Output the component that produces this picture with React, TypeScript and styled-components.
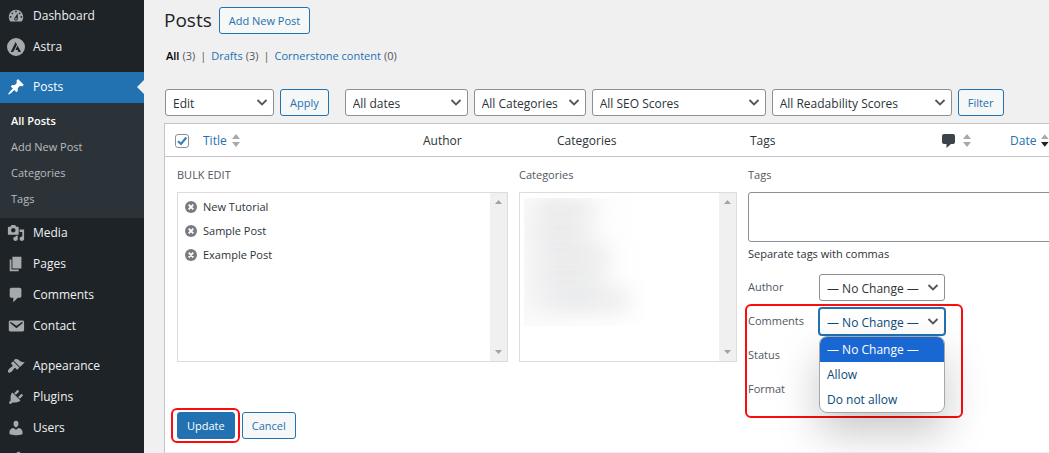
import React, { useState } from "react";
import styled, { createGlobalStyle, css } from "styled-components";

const color = {
  page: "#f0f0f1",
  menu: "#1d2327",
  submenu: "#2c3338",
  blue: "#2271b1",
  text: "#2c3338",
  label: "#50575e",
  muted: "#a7aaad",
  line: "#c3c4c7",
  control: "#8c8f94",
  mark: "#fb0d0d",
};

const GlobalStyle = createGlobalStyle`
  *, *::before, *::after { box-sizing: border-box; }
  body {
    margin: 0;
    background: ${color.page};
    color: ${color.text};
    font: 11px/18px "Open Sans", "Noto Sans", sans-serif;
  }
  button, input, select, textarea { font: inherit; margin: 0; }
  ul { list-style: none; margin: 0; padding: 0; }
`;

const Shell = styled.div`
  display: flex;
  height: 100vh;
  overflow: hidden;
`;

/* ---------- Side menu ---------- */

const Menu = styled.nav`
  flex: 0 0 144px;
  padding-top: 1px;
  background: ${color.menu};
`;

const MenuItem = styled.li<{ $spaced?: boolean }>`
  margin-top: ${(p) => (p.$spaced ? 9 : 0)}px;
`;

const MenuLink = styled.a<{ $current?: boolean }>`
  position: relative;
  display: flex;
  align-items: center;
  gap: 8px;
  height: 31px;
  padding: 0 0 1px 7px;
  color: ${(p) => (p.$current ? "#fff" : "#f0f0f1")};
  background: ${(p) => (p.$current ? color.blue : "transparent")};
  font-size: 12px;
  text-decoration: none;

  svg {
    flex: none;
    width: 18px;
    height: 18px;
    fill: ${(p) => (p.$current ? "#fff" : color.muted)};
  }

  ${(p) =>
    p.$current &&
    css`
      &::after {
        content: "";
        position: absolute;
        right: 0;
        top: 8px;
        border: 7px solid transparent;
        border-left-width: 0;
        border-right-color: ${color.page};
      }
    `}
`;

const Submenu = styled.ul`
  padding: 5px 0 6px;
  background: ${color.submenu};
`;

const SubmenuLink = styled.a<{ $current?: boolean }>`
  display: block;
  padding-left: 11px;
  line-height: 26px;
  color: ${(p) => (p.$current ? "#fff" : "#b9bcbf")};
  font-weight: ${(p) => (p.$current ? 600 : 400)};
  text-decoration: none;
`;

/* ---------- Shared controls ---------- */

const Main = styled.main`
  flex: 1;
  min-width: 0;
  overflow: hidden;
  padding: 7px 0 0 20px;
`;

const Button = styled.button<{ $primary?: boolean }>`
  height: 27px;
  padding: 0 9px;
  border: 1px solid ${color.blue};
  border-radius: 3px;
  background: ${(p) => (p.$primary ? color.blue : "#f6f7f7")};
  color: ${(p) => (p.$primary ? "#fff" : color.blue)};
  white-space: nowrap;
`;

const SelectBox = styled.span<{ $width: number; $focused?: boolean }>`
  position: relative;
  display: block;
  flex: none;
  width: ${(p) => p.$width}px;

  select {
    appearance: none;
    display: block;
    width: 100%;
    height: 27px;
    padding: 2px 20px 0 7px;
    border: 1px solid ${(p) => (p.$focused ? color.blue : color.control)};
    border-radius: 3px;
    outline: none;
    box-shadow: ${(p) => (p.$focused ? `0 0 0 1px ${color.blue}` : "none")};
    background: #fff;
    color: ${(p) => (p.$focused ? "#0a4b78" : color.text)};
    font-size: 12px;
  }

  svg {
    position: absolute;
    right: 6px;
    top: 9px;
    width: 12px;
    height: 9px;
    pointer-events: none;
  }
`;

type SelectProps = {
  label?: string;
  id?: string;
  width: number;
  options: string[];
  focused?: boolean;
};

const Select = ({ label, id, width, options, focused }: SelectProps) => (
  <SelectBox $width={width} $focused={focused}>
    <select id={id} aria-label={label}>
      {options.map((o) => (
        <option key={o}>{o}</option>
      ))}
    </select>
    <svg viewBox="0 0 12 9" fill="none" stroke="#50575e" strokeWidth="1.8" aria-hidden="true">
      <path d="M1.5 2 6 6.500 10.500 2" />
    </svg>
  </SelectBox>
);

/* ---------- Page head ---------- */

const Head = styled.header`
  display: flex;
  align-items: center;
  gap: 7px;
`;

const Title = styled.h1`
  margin: 0;
  font-size: 19px;
  line-height: 27px;
  font-weight: 400;
  color: #1d2327;
`;

const Views = styled.ul`
  display: flex;
  margin: 13px 0 24px;
  padding-left: 2px;
  color: ${color.label};

  li + li::before {
    content: "|";
    margin: 0 5px;
  }
`;

const ViewLink = styled.a<{ $current?: boolean }>`
  margin-right: 3px;
  color: ${(p) => (p.$current ? "#000" : color.blue)};
  font-weight: ${(p) => (p.$current ? 600 : 400)};
  text-decoration: none;
`;

const Filters = styled.form`
  display: flex;
  gap: 6px;
  margin-bottom: 7px;
  padding-left: 1px;
`;

const BulkAction = styled.div`
  display: flex;
  gap: 6px;
  margin-right: 10px;
`;

/* ---------- Post table ---------- */

const Table = styled.table`
  width: 100%;
  table-layout: fixed;
  border-collapse: separate;
  border-spacing: 0;
  border: 1px solid ${color.line};
  border-right: 0;
  background: #fff;
`;

const HeadCell = styled.th<{ $width?: number }>`
  width: ${(p) => (p.$width ? `${p.$width}px` : "auto")};
  height: 33px;
  padding: 1px 0 0 8px;
  border-bottom: 1px solid ${color.line};
  font-size: 12px;
  font-weight: 400;
  text-align: left;
  white-space: nowrap;
`;

const CheckCell = styled(HeadCell)`
  padding-left: 10px;
`;

const Check = styled.input`
  appearance: none;
  display: block;
  width: 14px;
  height: 14px;
  border: 1px solid ${color.control};
  border-radius: 3px;
  background: #fff;

  &:checked {
    background: no-repeat center / 12px
      url("data:image/svg+xml,%3Csvg xmlns='http://www.w3.org/2000/svg' viewBox='0 0 12 12'%3E%3Cpath d='M2 6.300 5 9 10.300 2.500' fill='none' stroke='%233582c4' stroke-width='2.200'/%3E%3C/svg%3E");
  }
`;

const SortLink = styled.a<{ $gap?: number }>`
  display: flex;
  align-items: center;
  gap: ${(p) => p.$gap ?? 5}px;
  color: ${color.blue};
  text-decoration: none;
`;

const SortIcon = ({ down }: { down?: boolean }) => (
  <svg width="8" height="14" viewBox="0 0 8 14" aria-hidden="true">
    <path d="M4 0 8 5H0z" fill="#a7aaad" />
    <path d="M4 13 0 8h8z" fill={down ? "#1d2327" : "#a7aaad"} />
  </svg>
);

const EditCell = styled.td`
  padding: 9px 0 13px 12px;
  border-bottom: 1px solid #f0f0f1;
`;

/* ---------- Bulk edit ---------- */

const Columns = styled.div`
  display: grid;
  grid-template-columns: minmax(0, 331fr) minmax(0, 218fr) minmax(0, 301fr);
  column-gap: 11px;
`;

const Legend = styled.h2<{ $upper?: boolean }>`
  display: block;
  margin: 0 0 8px;
  font-size: 11px;
  line-height: 18px;
  font-weight: 400;
  color: ${color.label};
  text-transform: ${(p) => (p.$upper ? "uppercase" : "none")};
`;

const ListBox = styled.div`
  display: flex;
  justify-content: space-between;
  height: 170px;
  border: 1px solid #dcdcde;
  background: #fff;
`;

const ListBody = styled.ul`
  flex: 1;
  min-width: 0;
  padding: 2px 0 0 7px;
`;

const Scrollbar = styled.div`
  display: flex;
  flex-direction: column;
  justify-content: space-between;
  align-items: center;
  width: 17px;
  padding: 7px 0;
  background: #f0f0f0;
`;

const ScrollTrack = () => (
  <Scrollbar aria-hidden="true">
    <svg width="7" height="4" viewBox="0 0 7 4">
      <path d="M3.500 0 7 4H0z" fill="#a3a3a3" />
    </svg>
    <svg width="7" height="4" viewBox="0 0 7 4">
      <path d="M3.500 4 0 0h7z" fill="#a3a3a3" />
    </svg>
  </Scrollbar>
);

const PostEntry = styled.li`
  display: flex;
  align-items: center;
  gap: 6px;
  height: 24px;
`;

const RemoveButton = styled.button`
  display: block;
  width: 12px;
  height: 12px;
  padding: 0;
  border: 0;
  background: none;

  svg {
    display: block;
  }
`;

const Redacted = styled.div`
  width: 122px;
  height: 128px;
  margin: 5px 0 0 4px;
  padding: 4px 0 18px 4px;
  display: flex;
  flex-direction: column;
  justify-content: space-between;
  overflow: hidden;
  background: linear-gradient(to right, #fbfbfb, #fdfdfd 60%, #fff);
`;

const Smudge = styled.span<{ $width: number }>`
  width: ${(p) => p.$width}%;
  height: 16px;
  background: linear-gradient(to right, #f0f1f3, #dedfe1 40%, #e6e7e8);
  filter: blur(11px);
`;

const TagsInput = styled.textarea`
  display: block;
  width: calc(100% + 8px);
  height: 50px;
  border: 1px solid ${color.control};
  border-radius: 3px;
  background: #fff;
  resize: none;
`;

const Hint = styled.p`
  margin: 3px 0 11px;
`;

const Fields = styled.div`
  display: grid;
  row-gap: 7px;
`;

const Field = styled.div`
  position: relative;
  display: flex;
  align-items: center;

  label {
    flex: 0 0 71px;
    padding-bottom: 2px;
    color: ${color.label};
  }
`;

const Highlight = styled.div`
  position: absolute;
  left: -3px;
  top: -4px;
  width: 218px;
  height: 114px;
  border: 2px solid ${color.mark};
  border-radius: 6px;
  pointer-events: none;
`;

const Options = styled.ul`
  position: absolute;
  z-index: 1;
  left: 71px;
  top: 28px;
  width: 126px;
  overflow: hidden;
  border: 1px solid #a5a7aa;
  border-radius: 8px;
  background: #fff;
  box-shadow: 0 20px 44px rgba(0, 0, 0, 0.22);
`;

const Option = styled.li<{ $active?: boolean }>`
  padding-left: 7px;
  font-size: 12px;
  line-height: 25px;
  white-space: nowrap;
  background: ${(p) => (p.$active ? "#1967d2" : "transparent")};
  color: ${(p) => (p.$active ? "#fff" : "#0a4b78")};
`;

const Actions = styled.div`
  display: flex;
  gap: 7px;
  margin-top: 9px;
`;

const Ringed = styled.span`
  position: relative;

  &::after {
    content: "";
    position: absolute;
    inset: -4px -5px -4px -6px;
    border: 2px solid ${color.mark};
    border-radius: 6px;
    pointer-events: none;
  }
`;

/* ---------- Data ---------- */

const icons: Record<string, string> = {
  Dashboard:
    "M3.76 16h12.48c1.1-1.37 1.76-3.11 1.76-5 0-4.42-3.58-8-8-8s-8 3.58-8 8c0 1.89.66 3.63 1.76 5zM10 4c.55 0 1 .45 1 1s-.45 1-1 1-1-.45-1-1 .45-1 1-1zM6 6c.55 0 1 .45 1 1s-.45 1-1 1-1-.45-1-1 .45-1 1-1zm8 0c.55 0 1 .45 1 1s-.45 1-1 1-1-.45-1-1 .45-1 1-1zm-5.37 5.55L12 7v6c0 1.1-.9 2-2 2s-2-.9-2-2c0-.57.24-1.08.63-1.45zM4 10c.55 0 1 .45 1 1s-.45 1-1 1-1-.45-1-1 .45-1 1-1zm12 0c.55 0 1 .45 1 1s-.45 1-1 1-1-.45-1-1 .45-1 1-1zm-5 3c0-.55-.45-1-1-1s-1 .45-1 1 .45 1 1 1 1-.45 1-1z",
  Astra:
    "M10 0a10 10 0 1 0 0 20 10 10 0 0 0 0-20zM9.600 4.400l1.500 3L6.900 15.600H4.100zM11.700 8.200l3.900 7.400h-2.900l-1.100-2.400H9.300z",
  Posts:
    "M10.44 3.02l1.82-1.82 6.36 6.35-1.83 1.82c-1.05-.68-2.48-.57-3.41.36l-.75.75c-.92.93-1.04 2.35-.35 3.41l-1.83 1.82-2.41-2.41-2.8 2.79c-.42.42-3.38 2.71-3.8 2.29s1.86-3.39 2.28-3.81l2.79-2.79L4.1 9.36l1.83-1.82c1.05.69 2.48.57 3.4-.36l.75-.75c.93-.92 1.05-2.35.36-3.41z",
  Media:
    "M13 11V4c0-.55-.45-1-1-1h-1.67L9 1H5L3.67 3H2c-.55 0-1 .45-1 1v7c0 .55.45 1 1 1h10c.55 0 1-.45 1-1zM7 4.5c1.38 0 2.5 1.12 2.5 2.5S8.38 9.5 7 9.5 4.500 8.38 4.500 7 5.62 4.500 7 4.500zM14 6h5v10.500c0 1.38-1.12 2.500-2.500 2.500S14 17.88 14 16.500s1.12-2.500 2.500-2.500c.17 0 .34.02.5.05V9h-3V6zm-4 8.05V13h2v3.500c0 1.38-1.12 2.500-2.500 2.500S7 17.88 7 16.500 8.120 14 9.500 14c.17 0 .34.02.5.05z",
  Pages: "M6 15V2h10v13H6zm-1 1h8v2H3V5h2v11z",
  Comments:
    "M5 2h9c1.1 0 2 .9 2 2v7c0 1.1-.9 2-2 2h-2l-5 5v-5H5c-1.1 0-2-.9-2-2V4c0-1.1.9-2 2-2z",
  Contact:
    "M3.87 4h13.25C18.37 4 19 4.59 19 5.79v8.42c0 1.19-.63 1.79-1.88 1.79H3.87c-1.25 0-1.88-.6-1.88-1.79V5.79c0-1.2.63-1.79 1.88-1.79zm6.620 8.6l6.740-5.53c.24-.2.43-.66.13-1.07-.29-.41-.82-.42-1.17-.17l-5.700 3.860L4.800 5.830c-.35-.25-.88-.24-1.170.17-.3.41-.11.87.13 1.070z",
  Appearance:
    "M14.48 11.06L7.41 3.99l1.500-1.500c.5-.56 2.300-.47 3.510.32 1.210.8 1.430 1.280 2.910 2.100 1.180.64 2.450 1.260 4.450.85zm-.71.71L6.700 4.700 4.930 6.470c-.39.39-.39 1.020 0 1.410l1.060 1.060c.39.39.39 1.030 0 1.420-.6.6-1.430 1.110-2.210 1.690-.35.26-.7.53-1.010.84C1.430 14.230.4 16.080 1.400 17.070c.99 1 2.840-.03 4.180-1.360.31-.31.58-.66.85-1.020.57-.78 1.080-1.610 1.690-2.210.39-.39 1.020-.39 1.410 0l1.060 1.060c.39.39 1.020.39 1.410 0z",
  Plugins:
    "M13.11 4.36L9.870 7.600 8 5.730l3.240-3.240c.35-.34 1.050-.2 1.560.32.52.51.66 1.210.31 1.550zm-8 1.770l.91-1.120 9.010 9.010-1.190.84c-.71.71-2.630 1.160-3.820 1.160H6.140L4.900 17.260c-.59.59-1.540.59-2.120 0-.59-.58-.59-1.530 0-2.120l1.240-1.240v-3.880c0-1.130.4-3.190 1.090-3.890zm7.260 3.970l3.240-3.240c.34-.35 1.040-.21 1.550.31.52.51.66 1.210.31 1.550l-3.240 3.250z",
  Users:
    "M10 9.250c-2.270 0-2.730-3.440-2.730-3.440C7 4.020 7.820 2 9.970 2c2.160 0 2.980 2.020 2.710 3.810 0 0-.41 3.440-2.680 3.440zm0 2.570L12.720 10c2.390 0 4.520 2.330 4.520 4.530v2.490s-3.650 1.130-7.240 1.130c-3.650 0-7.240-1.130-7.240-1.130v-2.490c0-2.250 1.940-4.480 4.470-4.480z",
  Tools:
    "M16.68 9.770c-1.340 1.340-3.300 1.670-4.950.99l-5.410 6.520c-.99.99-2.590.99-3.580 0s-.99-2.590 0-3.570l6.520-5.420c-.68-1.650-.35-3.610.99-4.950 1.280-1.280 3.120-1.620 4.720-1.060l-2.890 2.890 2.820 2.820 2.860-2.870c.53 1.580.18 3.390-1.080 4.650zM3.810 16.210c.4.39 1.040.39 1.430 0 .4-.4.4-1.040 0-1.430-.39-.4-1.030-.4-1.430 0-.39.39-.39 1.030 0 1.430z",
};

type MenuEntry = { name: string; spaced?: boolean; children?: string[]; iconOnly?: boolean };

const menuItems: MenuEntry[] = [
  { name: "Dashboard" },
  { name: "Astra" },
  { name: "Posts", spaced: true, children: ["All Posts", "Add New Post", "Categories", "Tags"] },
  { name: "Media" },
  { name: "Pages" },
  { name: "Comments" },
  { name: "Contact" },
  { name: "Appearance", spaced: true },
  { name: "Plugins" },
  { name: "Users" },
  { name: "Tools", iconOnly: true },
];

const views = [
  { name: "All", count: 3, current: true },
  { name: "Drafts", count: 3 },
  { name: "Cornerstone content", count: 0 },
];

const noChange = "— No Change —";
const commentOptions = [noChange, "Allow", "Do not allow"];

const RedactedList = () => (
  <Redacted aria-hidden="true">
    {[56, 52, 68, 64, 86].map((width, i) => (
      <Smudge key={i} $width={width} />
    ))}
  </Redacted>
);

export default function App() {
  const [allChecked, setAllChecked] = useState(true);

  return (
    <>
      <GlobalStyle />
      <Shell>
        <Menu aria-label="Main menu">
          <ul>
            {menuItems.map((item) => (
              <MenuItem key={item.name} $spaced={item.spaced}>
                <MenuLink href="#" $current={!!item.children} aria-label={item.name}>
                  <svg viewBox="0 0 20 20" fillRule="evenodd" aria-hidden="true">
                    <path d={icons[item.name]} />
                  </svg>
                  {!item.iconOnly && item.name}
                </MenuLink>
                {item.children && (
                  <Submenu>
                    {item.children.map((child, i) => (
                      <li key={child}>
                        <SubmenuLink href="#" $current={i === 0}>
                          {child}
                        </SubmenuLink>
                      </li>
                    ))}
                  </Submenu>
                )}
              </MenuItem>
            ))}
          </ul>
        </Menu>

        <Main>
          <Head>
            <Title>Posts</Title>
            <Button type="button">Add New Post</Button>
          </Head>

          <Views>
            {views.map((v) => (
              <li key={v.name}>
                <ViewLink href="#" $current={v.current}>
                  {v.name}
                </ViewLink>
                ({v.count})
              </li>
            ))}
          </Views>

          <Filters onSubmit={(e) => e.preventDefault()}>
            <BulkAction>
              <Select label="Bulk action" width={109} options={["Edit"]} />
              <Button type="submit">Apply</Button>
            </BulkAction>
            <Select label="Filter by date" width={123} options={["All dates"]} />
            <Select label="Filter by category" width={112} options={["All Categories"]} />
            <Select label="Filter by SEO score" width={174} options={["All SEO Scores"]} />
            <Select
              label="Filter by readability score"
              width={180}
              options={["All Readability Scores"]}
            />
            <Button type="submit">Filter</Button>
          </Filters>

          <Table>
            <thead>
              <tr>
                <CheckCell $width={30}>
                  <Check
                    type="checkbox"
                    aria-label="Select all"
                    checked={allChecked}
                    onChange={(e) => setAllChecked(e.target.checked)}
                  />
                </CheckCell>
                <HeadCell>
                  <SortLink href="#">
                    Title <SortIcon />
                  </SortLink>
                </HeadCell>
                <HeadCell $width={134}>Author</HeadCell>
                <HeadCell $width={193}>Categories</HeadCell>
                <HeadCell $width={192}>Tags</HeadCell>
                <HeadCell $width={68}>
                  <SortLink href="#" aria-label="Comments" $gap={8}>
                    <svg width="13" height="14" viewBox="0 0 13 14" aria-hidden="true">
                      <path
                        d="M2 0h9a2 2 0 0 1 2 2v6a2 2 0 0 1-2 2H9L4.500 14V10H2a2 2 0 0 1-2-2V2a2 2 0 0 1 2-2z"
                        fill="#3c434a"
                      />
                    </svg>
                    <SortIcon />
                  </SortLink>
                </HeadCell>
                <HeadCell $width={47}>
                  <SortLink href="#">
                    Date <SortIcon down />
                  </SortLink>
                </HeadCell>
              </tr>
            </thead>
            <tbody>
              <tr>
                <EditCell colSpan={7}>
                  <Columns>
                    <section>
                      <Legend $upper>Bulk Edit</Legend>
                      <ListBox>
                        <ListBody>
                          {["New Tutorial", "Sample Post", "Example Post"].map((post) => (
                            <PostEntry key={post}>
                              <RemoveButton type="button" aria-label={`Remove ${post}`}>
                                <svg width="12" height="12" viewBox="0 0 12 12">
                                  <circle cx="6" cy="6" r="6" fill="#787c82" />
                                  <path
                                    d="M3.700 3.700 8.300 8.300M8.300 3.700 3.700 8.300"
                                    stroke="#fff"
                                    strokeWidth="1.800"
                                  />
                                </svg>
                              </RemoveButton>
                              {post}
                            </PostEntry>
                          ))}
                        </ListBody>
                        <ScrollTrack />
                      </ListBox>
                    </section>

                    <section>
                      <Legend>Categories</Legend>
                      <ListBox>
                        <RedactedList />
                        <ScrollTrack />
                      </ListBox>
                    </section>

                    <section>
                      <Legend as="label" htmlFor="tags">
                        Tags
                      </Legend>
                      <TagsInput id="tags" />
                      <Hint>Separate tags with commas</Hint>
                      <Fields>
                        <Field>
                          <label htmlFor="author">Author</label>
                          <Select id="author" width={126} options={[noChange]} />
                        </Field>
                        <Field>
                          <label htmlFor="comments">Comments</label>
                          <Select id="comments" width={126} options={commentOptions} focused />
                          <Options role="listbox" aria-label="Comments">
                            {commentOptions.map((o, i) => (
                              <Option
                                key={o}
                                role="option"
                                aria-selected={i === 0}
                                $active={i === 0}
                              >
                                {o}
                              </Option>
                            ))}
                          </Options>
                          <Highlight />
                        </Field>
                        <Field>
                          <label htmlFor="status">Status</label>
                          <Select id="status" width={126} options={[noChange]} />
                        </Field>
                        <Field>
                          <label htmlFor="format">Format</label>
                          <Select id="format" width={126} options={[noChange]} />
                        </Field>
                      </Fields>
                    </section>
                  </Columns>

                  <Actions>
                    <Ringed>
                      <Button type="button" $primary>
                        Update
                      </Button>
                    </Ringed>
                    <Button type="button">Cancel</Button>
                  </Actions>
                </EditCell>
              </tr>
            </tbody>
          </Table>
        </Main>
      </Shell>
    </>
  );
}
